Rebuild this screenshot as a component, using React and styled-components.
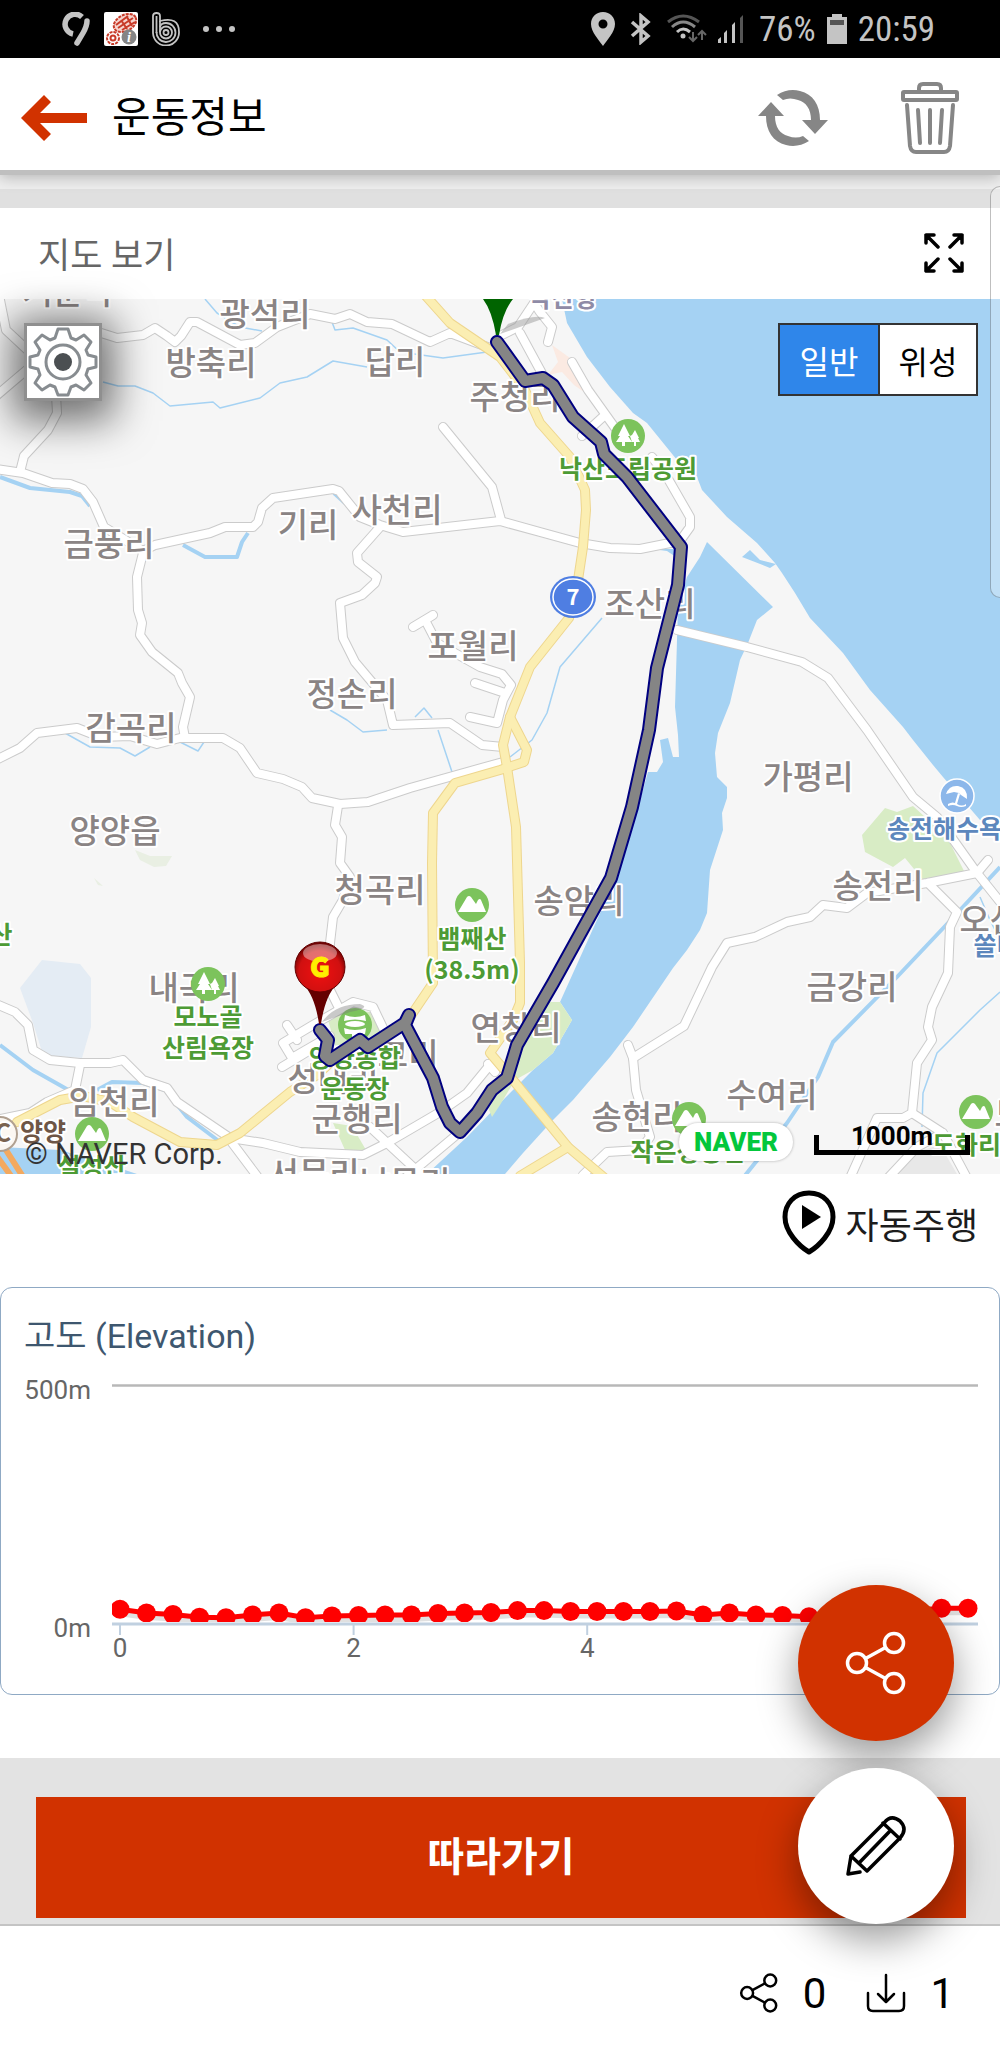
import React from "react";
import styled, { createGlobalStyle } from "styled-components";

const ROADS = [
  "M0 300L6 330L36 358",
  "M-4 396L36 362",
  "M56 395L57 413L48 430L24 456L20 472",
  "M98 332L117 338L143 335L155 328L167 336L175 342L181 336L190 322L197 322L240 345L255 343L277 327L310 314L335 319L350 314L367 322L392 324L430 342L450 333L490 348",
  "M-4 469L23 473L52 483L70 484L83 489L93 502L104 527L143 551L155 545L187 538L210 533L225 527L253 527L258 522L262 508L273 498L333 489L339 491L360 517L380 525L403 532L500 521L540 532L580 543L610 548L640 549L680 541L690 527L690 517L667 477L652 457",
  "M443 427L492 487L501 520",
  "M143 553L137 577L138 610L142 623L140 635L152 652L178 673L182 683L190 697L183 727L185 738",
  "M380 527L357 553L358 562L377 577L375 583L362 595L340 603L343 638L355 662L387 700L393 725L450 723L482 745L503 747",
  "M413 627L433 615L425 620L437 643L480 667L502 674L511 685L503 700L497 723L470 717",
  "M475 683L505 693",
  "M-4 760L20 748L37 733L77 728L100 737L130 736L157 744L180 738L223 738L240 748L257 773L283 779L302 787L312 798L340 804L368 802L410 788L503 762",
  "M338 806L335 825L342 837L340 863L350 877L343 900L333 917L330 943L330 990L338 1006",
  "M-4 1004L15 1012L28 1025L33 1050L50 1060L80 1063L110 1063L123 1060L143 1080L167 1088L177 1102L230 1138L263 1143L300 1152L363 1155L387 1143L440 1112L467 1093L494 1060",
  "M80 1065L75 1090L47 1102L30 1113L-4 1120",
  "M287 1025L297 1040M282 1067L310 1050M313 1025L283 1043L292 1058L330 1036M313 1025L353 1002L373 1007L384 1030",
  "M370 1127L427 1180M460 1132L405 1178M230 1140L260 1180M488 1064L495 1072",
  "M677 630L747 647L802 662L828 678L867 730L913 797L937 817L977 873L1005 908",
  "M988 860L977 873L927 883L867 893L847 908L823 905L810 917L787 922L755 937L727 943L712 967L684 1026L633 1058L628 1045",
  "M633 1058L636 1090L650 1137L640 1150L607 1152L583 1175",
  "M928 883L957 912L950 927L948 973L932 1007L928 1027L932 1040L917 1063L912 1113L903 1118L877 1118L850 1178",
  "M912 1113L943 1133L967 1178M888 1178L917 1147L943 1133",
  "M500 336L518 327L534 303L540 312L552 327L548 342M520 333L545 379",
  "M572 362L588 390L618 432M605 415L582 436",
];

const HIGHWAYS = [
  "M425 295L450 323L500 357L524 388L540 423L570 457L585 490L586 510L583 547L578 580L569 618L530 667L510 717L503 745L507 767",
  "M510 717L527 750L524 762L500 770L455 783L433 813L432 863L433 983L410 1017",
  "M507 767L516 827L520 963L520 1003L513 1020L490 1053L513 1080L568 1147L607 1180",
  "M568 1147L520 1176",
  "M17 1122L60 1100L83 1096L110 1102L133 1117L180 1142L217 1145L240 1133L290 1092L317 1075L335 1058",
];

const STREAMS = [
  "M205 299L217 313L240 327L262 331",
  "M332 322L335 330L353 328L387 340L400 352L443 358L487 352",
  "M103 382L118 386L135 386L153 393L170 406L213 402L220 408L260 398L280 383L307 377L333 361L367 367",
  "M602 618L560 667L547 713L532 740L510 757",
  "M438 730L452 772",
  "M1000 992L980 1010L937 1053L923 1093L922 1127",
  "M65 733L90 747L120 748L135 756L150 747M180 742L198 751L204 742",
  "M330 710L347 720L363 732L387 730M415 717L424 708L432 718",
  "M980 897L990 920L1000 940",
];

const RIVERS = [
  "M0 477L30 488L70 492L82 496L90 506",
  "M183 545L205 557L237 557L242 542L248 533",
  "M334 493L345 503",
  "M1000 867L948 923L897 977L833 1042L818 1077L787 1123L743 1178",
  "M0 1045L33 1070L72 1092M97 1090L112 1082L143 1083L165 1090L187 1117L220 1142M238 1153L258 1178",
];

const TRACK =
  "M497 342L525 381L543 378L553 385L573 417L601 442L604 454L627 477L681 547L678 585L657 668L649 730L632 807L611 878L553 983L517 1045L507 1078L492 1090L477 1113L460 1132L450 1123L442 1107L433 1078L405 1025L409 1015L405 1023L368 1047L360 1040L330 1060L325 1056L328 1040L320 1030";

const VILLAGES = [
  ["거문막", 68, 304],
  ["광석리", 265, 326],
  ["방축리", 211, 375],
  ["답리", 395, 374],
  ["주청리", 515, 409],
  ["사천리", 397, 522],
  ["기리", 308, 537],
  ["금풍리", 109, 556],
  ["조산리", 650, 616],
  ["포월리", 473, 658],
  ["정손리", 352, 706],
  ["감곡리", 131, 740],
  ["가평리", 808, 789],
  ["양양읍", 115, 843],
  ["청곡리", 380, 902],
  ["송암리", 579, 913],
  ["송전리", 878, 898],
  ["오산리", 1005, 932],
  ["내곡리", 194, 1000],
  ["금강리", 852, 999],
  ["연창리", 516, 1040],
  ["구교리", 393, 1067],
  ["임천리", 114, 1114],
  ["성내리", 333, 1091],
  ["수여리", 772, 1107],
  ["송현리", 637, 1129],
  ["군행리", 357, 1131],
  ["서문리", 314, 1186],
  ["남문리", 405, 1195],
  ["도화리", 1040, 1126],
];

const PLACES = [
  ["낙산도립공원", 628, 478],
  ["뱀째산", 472, 948],
  ["(38.5m)", 472, 979],
  ["모노골", 208, 1026],
  ["산림욕장", 208, 1057],
  ["양양종합", 355, 1067],
  ["운동장", 355, 1098],
  ["설성산", 92, 1176],
  ["작은성황산", 688, 1161],
  ["도화리산", 978, 1154],
  ["산", 1, 944],
];

const ELEVATION = [
  33, 25, 22, 16, 15, 21, 25, 15, 19, 20, 21, 21, 24, 25, 26, 30, 30, 28, 28,
  28, 28, 29, 21, 25, 21, 20, 17, 15, 18, 25, 31, 35, 35,
];

const GlobalStyle = createGlobalStyle`
  * {
    box-sizing: border-box;
  }
  body {
    margin: 0;
    background-color: white;
    font-family: Roboto, "Noto Sans CJK KR", sans-serif;
  }
  button {
    font-family: inherit;
    padding: 0;
    border: none;
    background: none;
    cursor: pointer;
  }
  svg {
    display: block;
  }
`;

const Container = styled.div`
  position: relative;
  display: flex;
  flex-direction: column;
  min-height: 100vh;
  overflow: hidden;
`;

const StatusBar = styled.div`
  display: flex;
  justify-content: space-between;
  align-items: center;
  height: 58px;
  padding: 0 65px 0 62px;
  background-color: black;
  color: #c4c4c4;
  font-family: "Roboto Condensed", Roboto, sans-serif;
  font-size: 35px;
`;

const StatusGroup = styled.div`
  display: flex;
  align-items: center;
  gap: ${props => props.$gap}px;
`;

const Header = styled.header`
  position: relative;
  display: flex;
  align-items: center;
  height: 117px;
  padding: 8px 40px 0 20px;
  border-bottom: 5px solid #bfbfbf;
  background-color: white;
  box-shadow: 0 2px 14px rgba(0, 0, 0, 0.25);
`;

const Title = styled.h1`
  flex: 1;
  margin: 0 0 0 24px;
  font-size: 42px;
  font-weight: 400;
  line-height: 56px;
`;

const IconButton = styled.button`
  display: flex;
  margin-left: ${props => props.$gap || 0}px;
`;

const Strip = styled.div`
  height: 33px;
  border-top: 14px solid #eeeeee;
  background-color: #e0e0e0;
`;

const SectionBar = styled.div`
  display: flex;
  justify-content: space-between;
  align-items: center;
  height: 91px;
  padding: 0 36px 2px 38px;
`;

const SectionTitle = styled.h2`
  margin: 0;
  color: #666666;
  font-size: 35px;
  font-weight: 400;
`;

const MapArea = styled.div`
  position: relative;
`;

const MapSvg = styled.svg`
  width: 100%;
  height: auto;
  background-color: #f6f6f6;
  font-family: "Noto Sans CJK KR", sans-serif;
`;

const Label = styled.text`
  text-anchor: middle;
  font-size: ${props => (props.$small ? 25 : 33)}px;
  font-weight: ${props => (props.$small ? 700 : 500)};
  fill: ${props => props.$color || "#8a8484"};
  stroke: white;
  stroke-width: 4px;
  stroke-linejoin: round;
  paint-order: stroke;
`;

const MapTools = styled.div`
  position: absolute;
  top: 24px;
  left: 24px;
  right: 22px;
  display: flex;
  justify-content: space-between;
  align-items: flex-start;
`;

const GearButton = styled.button`
  display: flex;
  justify-content: center;
  align-items: center;
  width: 78px;
  height: 78px;
  border: 3px solid #8f8f8f;
  background-color: white;
  box-shadow: 0 8px 40px 12px rgba(0, 0, 0, 0.55);
`;

const MapTypes = styled.div`
  display: flex;
  border: 2px solid #333333;
`;

const MapType = styled.button`
  width: 98px;
  height: 69px;
  border-left: ${props => (props.$active ? "none" : "2px solid #333333")};
  background-color: ${props => (props.$active ? "#2f86ea" : "white")};
  color: ${props => (props.$active ? "white" : "black")};
  font-size: 32px;
`;

const MapFooter = styled.div`
  position: absolute;
  bottom: 3px;
  left: 25px;
  right: 30px;
  display: flex;
  align-items: flex-end;
  color: #333333;
  font-size: 29px;
`;

const Copyright = styled.span`
  flex: 1;
`;

const NaverLogo = styled.span`
  margin: 0 21px 10px 0;
  padding: 0 15px;
  border-radius: 20px;
  background-color: white;
  box-shadow: 0 0 3px rgba(0, 0, 0, 0.3);
  color: #03c73c;
  font-size: 26px;
  font-weight: 900;
  line-height: 38px;
`;

const Scale = styled.span`
  width: 156px;
  height: 20px;
  margin-bottom: 16px;
  border: 5px solid black;
  border-top: none;
  color: black;
  font-size: 26px;
  font-weight: 700;
  line-height: 2px;
  text-align: center;
`;

const AutoRun = styled.div`
  display: flex;
  justify-content: flex-end;
  height: 113px;
  padding: 16px 22px 0 0;
`;

const AutoRunButton = styled.button`
  display: flex;
  align-items: center;
  gap: 10px;
  height: 66px;
  color: #1c1c1c;
  font-size: 36px;
`;

const ChartCard = styled.section`
  border: 1px solid #8fa9c4;
  border-radius: 12px;
  margin-bottom: 63px;
`;

const ChartSvg = styled.svg`
  width: 100%;
  height: auto;
`;

const Actions = styled.div`
  position: relative;
  height: 168px;
  padding: 39px 34px 0 36px;
  border-bottom: 2px solid #c4c4c4;
  background-color: #e3e3e3;
`;

const FollowButton = styled.button`
  width: 100%;
  height: 121px;
  padding-bottom: 8px;
  background-color: #d13200;
  color: white;
  font-size: 40px;
  font-weight: 700;
`;

const FabStack = styled.div`
  position: absolute;
  right: 46px;
  bottom: 0;
  display: flex;
  flex-direction: column;
  gap: 27px;
`;

const Fab = styled.button`
  display: flex;
  justify-content: center;
  align-items: center;
  width: 156px;
  height: 156px;
  border-radius: 50%;
  background-color: ${props => (props.$primary ? "#d13200" : "white")};
  color: ${props => (props.$primary ? "white" : "black")};
  box-shadow: 0 16px 40px rgba(0, 0, 0, 0.4);
  z-index: ${props => (props.$primary ? 0 : 1)};
`;

const Counters = styled.footer`
  flex: 1;
  display: flex;
  justify-content: flex-end;
  align-items: center;
  min-height: 130px;
  padding: 4px 46px 0 0;
`;

const Counter = styled.div`
  display: flex;
  align-items: center;
  gap: 24px;
  margin-left: 40px;
  font-size: 42px;
`;

const EdgePanel = styled.div`
  position: absolute;
  top: 186px;
  right: -10px;
  width: 20px;
  height: 412px;
  border: 1px solid rgba(0, 0, 0, 0.25);
  border-radius: 12px;
  background-color: rgba(255, 255, 255, 0.3);
`;

const ShareIcon = ({ size, stroke }) => (
  <svg width={size} height={size} viewBox="0 0 64 64" fill="none" stroke="currentColor" strokeWidth={stroke}>
    <circle cx="13" cy="32" r="9.5" />
    <circle cx="50" cy="12" r="9.5" />
    <circle cx="50" cy="52" r="9.5" />
    <path d="M21.500 27.500L41.500 16.500M21.500 36.500L41.500 47.500" />
  </svg>
);

const Mountain = ({ x, y }) => (
  <g transform={`translate(${x} ${y})`}>
    <circle r="17" fill="#7cc35c" />
    <path d="M-14 7L-5 -8Q-3 -10 -1 -8L4 -1L6 -5Q8 -7 9 -5L14 7Z" fill="white" />
  </g>
);

const Trees = ({ x, y }) => (
  <g transform={`translate(${x} ${y})`}>
    <circle r="17" fill="#7cc35c" />
    <path d="M-4 -12L2 0H0L4 6H-3V10H-6V6H-12L-8 0H-10ZM7 -6L11 2H10L12 6H8V10H6V6H4L2 0L4 -1Z" fill="white" />
  </g>
);

const CourseMap = () => (
  <MapSvg viewBox="0 299 1000 875" role="img" aria-label="지도">
    <path
      fill="#a5d2f3"
      d="M562 299L567 323L587 357L610 387L633 413L647 423L677 460L697 477L702 490L727 517L757 543L775 563L782 573L795 593L810 618L843 653L870 690L903 727L913 740L933 765L943 777L980 820L1000 820V299Z
      M742 557L750 550L760 560L776 564L770 568L755 562Z
      M652 549L667 551L676 557L676 549Z
      M707 542L773 607L757 620L748 643L740 660L730 703L718 733L715 753L717 777L727 787L727 798L722 813L723 830L710 870L707 913L700 930L687 950L673 968L633 1027L610 1057L573 1100L553 1120L523 1153L505 1174H427L467 1137L500 1103L533 1070L553 1053L572 1020L560 1002L615 880L638 807L648 772L657 772L663 762L660 740L668 738L673 757L679 757L678 735L675 707L677 640L678 607L687 577L700 557Z
      M-2 1147L60 1150L110 1165L140 1175H-2Z"
    />
    <path
      fill="#d8ecc5"
      d="M560 1002L572 1020L553 1053L533 1070L515 1080L500 1105L492 1117L487 1105L535 1002Z
      M862 835L885 808L897 812L913 806L947 837L965 873L923 880L905 858L893 867L865 852Z
      M328 1020L345 1010L370 1012L385 1040L340 1062Z M333 1123L352 1126L366 1150L345 1150Z"
    />
    <path fill="#e9efe3" d="M135 850L150 856L172 856L166 866L154 867L140 860ZM94 878L103 886L98 885Z" />
    <path fill="#fbeae2" d="M552 345L570 358L584 392L574 385L562 372L548 375L558 362Z" />
    <path fill="#e4ecf4" d="M42 960L80 964L91 978V1027L82 1058L43 1055L33 1023L20 988Z" />
    <path fill="#e8e8e8" d="M895 1174L922 1150L940 1145L957 1174Z" />
    <g fill="none" stroke="#a5d2f3" strokeLinejoin="round">
      {STREAMS.map(d => <path key={d} d={d} strokeWidth="1.5" />)}
      {RIVERS.map(d => <path key={d} d={d} strokeWidth="4" />)}
    </g>
    <g fill="none" strokeLinejoin="round" strokeLinecap="round">
      {ROADS.map(d => <path key={d} d={d} stroke="#cbcbcb" strokeWidth="10" />)}
      {ROADS.map(d => <path key={d} d={d} stroke="white" strokeWidth="8" />)}
      {HIGHWAYS.map(d => <path key={d} d={d} stroke="#eed68e" strokeWidth="10" />)}
      {HIGHWAYS.map(d => <path key={d} d={d} stroke="#fbeeb2" strokeWidth="8" />)}
      <path d="M-4 1155L14 1180M6 1150L25 1180" stroke="#f3a95f" strokeWidth="6" />
    </g>
    {VILLAGES.map(([name, x, y]) => <Label key={name} x={x} y={y}>{name}</Label>)}
    <Label x="563" y="307" $small $color="#8f8ba6">낙산항</Label>
    <Mountain x={472} y={905} />
    <Mountain x={92} y={1134} />
    <Mountain x={689} y={1119} />
    <Mountain x={976} y={1112} />
    <Trees x={628} y={436} />
    <Trees x={208} y={984} />
    <g transform="translate(355 1025)">
      <circle r="17" fill="#7cc35c" />
      <path d="M-10 -10Q0 -6 10 -10L11 -4Q0 -7 -11 -4Z" fill="white" />
      <ellipse cx="0" cy="-1" rx="10" ry="3" fill="white" />
      <path d="M-11 3Q0 7 11 3L10 9H3V14H-3V9H-10Z" fill="white" />
    </g>
    {PLACES.map(([name, x, y]) => <Label key={name} x={x} y={y} $small $color="#4d9b35">{name}</Label>)}
    <g transform="translate(957 796)">
      <circle r="17" fill="#8cb7ea" stroke="white" strokeWidth="1.500" />
      <path d="M-11 -2Q-8 -11 1 -10Q11 -8 10 3L4 -1L2 -3L-3 -4ZM1 -3L-2 7L0 8L3 -2ZM-9 8Q-4 5 0 8Q5 11 9 8V10Q4 12 0 10Q-4 8 -9 10Z" fill="white" />
    </g>
    <Label x="956" y="838" $small $color="#5c87bd">송전해수욕장</Label>
    <Label x="1008" y="955" $small $color="#5c87bd">쏠비치</Label>
    <circle cx="0" cy="1134" r="17" fill="#fbf7f2" stroke="#b0a090" strokeWidth="2" />
    <Label x="3" y="1142" $small $color="#7a6350">C</Label>
    <Label x="43" y="1141" $small $color="#6e5646">양양</Label>
    <g>
      <ellipse cx="573" cy="597" rx="23" ry="21" fill="#4f7ee2" />
      <ellipse cx="573" cy="597" rx="20" ry="18" fill="#4f7ee2" stroke="white" strokeWidth="1.500" />
      <text x="573" y="605" textAnchor="middle" fontSize="22" fontWeight="700" fill="white">7</text>
    </g>
    <path d="M500 334L545 318Q535 314 508 324Z" fill="#999999" fillOpacity="0.5" />
    <path d="M322 1022Q335 1004 360 1004Q372 1008 350 1012Z" fill="#777777" fillOpacity="0.4" />
    <g fill="none" strokeLinejoin="round" strokeLinecap="round">
      <path d={TRACK} stroke="#000080" strokeWidth="14" />
      <path d={TRACK} stroke="#858585" strokeWidth="10" />
    </g>
    <path d="M483 299Q492 311 496 335H499Q503 311 513 299Z" fill="#006400" />
    <defs>
      <radialGradient id="goal" cx="0.5" cy="0.6" r="0.6">
        <stop offset="0" stopColor="#f01010" />
        <stop offset="0.7" stopColor="#d01010" />
        <stop offset="1" stopColor="#600000" />
      </radialGradient>
    </defs>
    <path d="M303 984Q315 996 319 1024H321Q325 996 337 984Z" fill="#650000" />
    <circle cx="320" cy="967" r="25" fill="url(#goal)" stroke="#650000" />
    <ellipse cx="320" cy="953" rx="17" ry="9" fill="white" fillOpacity="0.4" />
    <text x="320" y="977" textAnchor="middle" fontSize="27" fontWeight="900" fill="#ffee00" stroke="#ffee00">G</text>
  </MapSvg>
);

const ElevationChart = () => {
  const points = ELEVATION.map((m, i) => [119 + i * 26.5, 337 - m * 0.48]);
  return (
    <ChartSvg viewBox="0 0 998 406">
      <defs>
        <clipPath id="plot">
          <rect x="111" y="90" width="866" height="244" />
        </clipPath>
      </defs>
      <text x="23" y="60" fontSize="34" fill="#3e576f">고도 (Elevation)</text>
      <path d="M111 97.500H977" stroke="#b8b8b8" strokeWidth="2.500" />
      <path d="M111 336H977" stroke="#c0d0e0" strokeWidth="3" />
      <g fill="#666666" fontSize="26">
        <text x="90" y="111" textAnchor="end">500m</text>
        <text x="90" y="349" textAnchor="end">0m</text>
        {[0, 2, 4].map(km => (
          <g key={km}>
            <path d={`M${119 + km * 116.8} 336V347`} stroke="#c0d0e0" strokeWidth="2" />
            <text x={119 + km * 116.8} y="369" textAnchor="middle">{km}</text>
          </g>
        ))}
      </g>
      <g clipPath="url(#plot)">
        <polyline points={points.map(([x, y]) => `${x},${y + 4}`).join(" ")} fill="none" stroke="#000000" strokeOpacity="0.12" strokeWidth="6" />
        <polyline points={points.map(p => p.join()).join(" ")} fill="none" stroke="red" strokeWidth="5" />
        {points.map(([x, y]) => <circle key={x} cx={x} cy={y} r="9.5" fill="red" />)}
      </g>
    </ChartSvg>
  );
};

const StatusIcons = () => (
  <>
    <svg width="24" height="34" viewBox="0 0 24 34" fill="#c4c4c4">
      <path fillRule="evenodd" d="M12 0C5 0 0 5 0 12C0 20 8 28 12 34C16 28 24 20 24 12C24 5 19 0 12 0ZM12 7.500A4.500 4.500 0 1 1 12 16.500A4.500 4.500 0 1 1 12 7.500Z" />
    </svg>
    <svg width="30" height="32" viewBox="-5 0 30 32" fill="none" stroke="#c4c4c4" strokeWidth="3.500">
      <path d="M1 9L17 23L10 29V3L17 9L1 23" />
    </svg>
    <svg width="40" height="30" viewBox="0 0 40 30" fill="none" strokeWidth="3">
      <path d="M1 8Q16 -4 32 8" stroke="#555555" />
      <path d="M5 13Q16 3 28 13" stroke="#888888" />
      <path d="M10 18Q16 12 23 18" stroke="#c4c4c4" />
      <circle cx="16" cy="22" r="2.500" fill="#c4c4c4" />
      <path d="M26 18V26M22 23L26 27L30 23M35 26V17M31 21L35 17L39 21" stroke="#666666" strokeWidth="2" />
    </svg>
    <svg width="30" height="30" viewBox="4 0 30 30" fill="#c4c4c4">
      <path d="M0 29L7 23V29ZM10 19L13 16V29H10ZM18 11L21 8V29H18Z" />
      <path d="M26 4L29 1V29H26Z" fill="#555555" />
    </svg>
  </>
);

export default () => (
  <Container>
    <GlobalStyle />
    <StatusBar>
      <StatusGroup $gap={14}>
        <svg width="28" height="34" viewBox="0 0 28 34" fill="none" stroke="#c4c4c4" strokeWidth="5.500">
          <path d="M20 5A10 10 0 1 0 11 22" />
          <path d="M25 9Q25 14 21 21L15 31" strokeLinecap="round" />
        </svg>
        <svg width="34" height="34" viewBox="0 0 34 34">
          <rect width="34" height="34" rx="2" fill="white" />
          <ellipse cx="21" cy="11" rx="12" ry="8" fill="#f6d5cf" stroke="#c83a28" strokeWidth="2" strokeDasharray="3 1" transform="rotate(-28 21 11)" />
          <path d="M12 13L24 4M14 16L29 6M18 18L31 10M17 8L23 17M23 5L28 14" stroke="#c83a28" strokeWidth="2" />
          <circle cx="9" cy="26" r="6" fill="none" stroke="#c83a28" strokeWidth="2" strokeDasharray="3 1" />
          <circle cx="9" cy="26" r="2.500" fill="none" stroke="#c83a28" strokeWidth="2" />
          <circle cx="25" cy="25" r="7.500" fill="#858585" />
          <text x="25" y="30" textAnchor="middle" fontFamily="Liberation Serif, serif" fontStyle="italic" fontWeight="700" fontSize="14" fill="white">i</text>
        </svg>
        <svg width="28" height="34" viewBox="0 0 28 34" fill="none" stroke="#c4c4c4" strokeWidth="1.800">
          <path d="M1 21V4Q1 1 4.500 1Q8 1 8 4V9Q27 4 27 20A13 13 0 0 1 1 21Z" />
          <path d="M4.500 21V4M8 9V20" />
          <path d="M4.500 20A9.500 9.500 0 1 0 14 11Q9 11 8 15" />
          <circle cx="14" cy="20.500" r="6" />
          <circle cx="14" cy="20.500" r="2.500" />
        </svg>
        <svg width="42" height="8" viewBox="0 0 42 8" fill="#c4c4c4">
          <circle cx="12" cy="4" r="3" />
          <circle cx="25" cy="4" r="3" />
          <circle cx="38" cy="4" r="3" />
        </svg>
      </StatusGroup>
      <StatusGroup $gap={11}>
        <StatusIcons />
        <span>76%</span>
        <svg width="20" height="30" viewBox="0 0 20 30" fill="#c4c4c4">
          <path d="M5 0H15V3H20V30H0V3H5Z" />
          <path d="M3 6H17V11H3Z" fill="#555555" />
        </svg>
        <span>20:59</span>
      </StatusGroup>
    </StatusBar>
    <Header>
      <IconButton aria-label="뒤로">
        <svg width="68" height="46" viewBox="0 0 68 46" fill="#d13200">
          <path d="M1 23L24 0L31 7L20 18H67V28H20L31 39L24 46Z" />
        </svg>
      </IconButton>
      <Title>운동정보</Title>
      <IconButton aria-label="새로고침">
        <svg width="72" height="58" viewBox="0 0 72 58" fill="#868686">
          <path d="M20 6Q31 -1 43 2C56 5 63 16 63 31H71L58 45L45 31H54C54 20 49 13 41 11Q33 8 26 11Z" />
          <path d="M52 52Q41 59 29 56C16 53 9 42 9 27H1L14 13L27 27H18C18 38 23 45 31 47Q39 50 46 47Z" />
        </svg>
      </IconButton>
      <IconButton aria-label="삭제" $gap={71}>
        <svg width="60" height="74" viewBox="0 0 60 74" fill="none" stroke="#868686" strokeWidth="4" strokeLinecap="round" strokeLinejoin="round">
          <rect x="3" y="11" width="54" height="8" rx="1" />
          <path d="M19 10V7Q19 3 23 3H37Q41 3 41 7V10" />
          <path d="M7 24L10 65Q11 71 16 71H44Q49 71 50 65L53 24" />
          <path d="M18 29L20 62M30 29V62M42 29L40 62" />
        </svg>
      </IconButton>
    </Header>
    <Strip />
    <SectionBar>
      <SectionTitle>지도 보기</SectionTitle>
      <IconButton aria-label="전체 화면">
        <svg width="40" height="40" viewBox="0 0 40 40" fill="none" stroke="black" strokeWidth="3.500" strokeLinecap="round" strokeLinejoin="round">
          <path d="M2 10V2H10M2 2L14 14M30 2H38V10M38 2L26 14M2 30V38H10M2 38L14 26M30 38H38V30M38 38L26 26" />
        </svg>
      </IconButton>
    </SectionBar>
    <MapArea>
      <CourseMap />
      <MapTools>
        <GearButton aria-label="지도 설정">
          <svg width="70" height="70" viewBox="-35 -35 70 70" fill="none" stroke="#878c90" strokeWidth="3" strokeLinejoin="round">
            <path d="M-5 -33H5L8 -24L13 -22L21 -27L28 -20L23 -12L25 -7L33 -5V5L25 7L23 13L28 21L21 28L13 23L8 25L5 33H-5L-8 25L-13 23L-21 28L-28 21L-23 13L-25 7L-33 5V-5L-25 -7L-23 -12L-28 -20L-21 -27L-13 -22L-8 -24Z" />
            <circle r="17" />
            <circle r="9" fill="#4b4f52" stroke="none" />
          </svg>
        </GearButton>
        <MapTypes>
          <MapType $active>일반</MapType>
          <MapType>위성</MapType>
        </MapTypes>
      </MapTools>
      <MapFooter>
        <Copyright>© NAVER Corp.</Copyright>
        <NaverLogo>NAVER</NaverLogo>
        <Scale>1000m</Scale>
      </MapFooter>
    </MapArea>
    <AutoRun>
      <AutoRunButton>
        <svg width="54" height="66" viewBox="0 0 54 66">
          <path d="M27 3C12 3 3 14 3 27C3 42 17 56 27 62C37 56 51 42 51 27C51 14 42 3 27 3Z" fill="none" stroke="black" strokeWidth="5" strokeLinejoin="round" />
          <path d="M20 15L39 27L20 39Z" />
        </svg>
        자동주행
      </AutoRunButton>
    </AutoRun>
    <ChartCard>
      <ElevationChart />
    </ChartCard>
    <Actions>
      <FollowButton>따라가기</FollowButton>
      <FabStack>
        <Fab $primary aria-label="공유">
          <ShareIcon size={64} stroke={3.5} />
        </Fab>
        <Fab aria-label="편집">
          <svg width="62" height="62" viewBox="0 0 62 62" fill="none" stroke="black" strokeWidth="3.500" strokeLinecap="round" strokeLinejoin="round">
            <path d="M6 41L39 8Q46 -1 55 6Q63 14 55 23L22 56ZM38 8L55 24M45 16L14 48M6 41L3 59L15 57" />
          </svg>
        </Fab>
      </FabStack>
    </Actions>
    <Counters>
      <Counter>
        <ShareIcon size={40} stroke={4} />
        0
      </Counter>
      <Counter>
        <svg width="40" height="40" viewBox="0 0 40 40" fill="none" stroke="black" strokeWidth="2.500" strokeLinecap="round" strokeLinejoin="round">
          <path d="M20 2V28M12 21L20 29L28 21M2 20V33Q2 38 7 38H33Q38 38 38 33V20" />
        </svg>
        1
      </Counter>
    </Counters>
    <EdgePanel />
  </Container>
);
